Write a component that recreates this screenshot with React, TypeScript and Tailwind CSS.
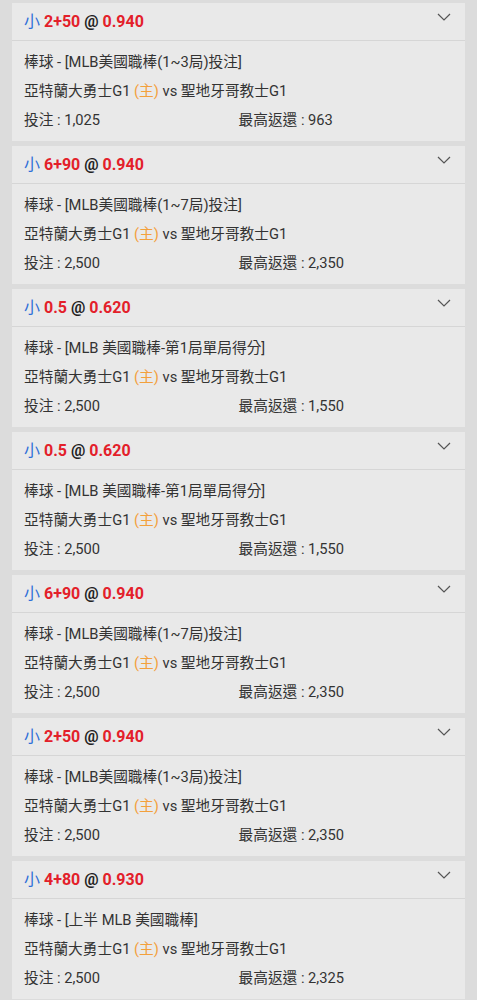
import React from "react";

interface Bet {
  line: string;
  odds: string;
  league: string;
  stake: string;
  payout: string;
}

const bets: Bet[] = [
  { line: "2+50", odds: "0.940", league: "棒球 - [MLB美國職棒(1~3局)投注]", stake: "1,025", payout: "963" },
  { line: "6+90", odds: "0.940", league: "棒球 - [MLB美國職棒(1~7局)投注]", stake: "2,500", payout: "2,350" },
  { line: "0.5", odds: "0.620", league: "棒球 - [MLB 美國職棒-第1局單局得分]", stake: "2,500", payout: "1,550" },
  { line: "0.5", odds: "0.620", league: "棒球 - [MLB 美國職棒-第1局單局得分]", stake: "2,500", payout: "1,550" },
  { line: "6+90", odds: "0.940", league: "棒球 - [MLB美國職棒(1~7局)投注]", stake: "2,500", payout: "2,350" },
  { line: "2+50", odds: "0.940", league: "棒球 - [MLB美國職棒(1~3局)投注]", stake: "2,500", payout: "2,350" },
  { line: "4+80", odds: "0.930", league: "棒球 - [上半 MLB 美國職棒]", stake: "2,500", payout: "2,325" },
];

function Chevron() {
  return (
    <svg width="14" height="8" viewBox="0 0 14 8" fill="none" className="text-[#555] mt-[10px]">
      <path d="M1 1l6 6 6-6" stroke="currentColor" strokeWidth="1.2" />
    </svg>
  );
}

function BetCard({ bet }: { bet: Bet }) {
  return (
    <div className="mx-3 bg-[#e9e9e9]">
      {/* header */}
      <div className="h-[38px] flex justify-between pl-3 pr-[14px] border-b border-[#d6d6d6]">
        <div className="self-center text-[16px] leading-none">
          <span className="text-[#2f6ed8]">小</span>{" "}
          <span className="font-bold text-[#e3202a]">{bet.line}</span>{" "}
          <span className="font-bold text-[#222]">@</span>{" "}
          <span className="font-bold text-[#e3202a]">{bet.odds}</span>
        </div>
        <Chevron />
      </div>
      {/* body */}
      <div className="px-3 pt-[7px] pb-[6px] text-[14.7px] leading-[29px] text-[#333]">
        <div>{bet.league}</div>
        <div>
          亞特蘭大勇士G1 <span className="text-[#f3a03c]">(主)</span> vs 聖地牙哥教士G1
        </div>
        <div className="grid grid-cols-2">
          <div>投注 : {bet.stake}</div>
          <div>最高返還 : {bet.payout}</div>
        </div>
      </div>
    </div>
  );
}

export default function App() {
  return (
    <div
      className="min-h-screen bg-[#dcdcdc] pt-[3px] flex flex-col gap-[5px]"
      style={{ fontFamily: "Roboto, 'Noto Sans CJK TC', sans-serif" }}
    >
      {bets.map((b, i) => (
        <BetCard key={i} bet={b} />
      ))}
    </div>
  );
}
